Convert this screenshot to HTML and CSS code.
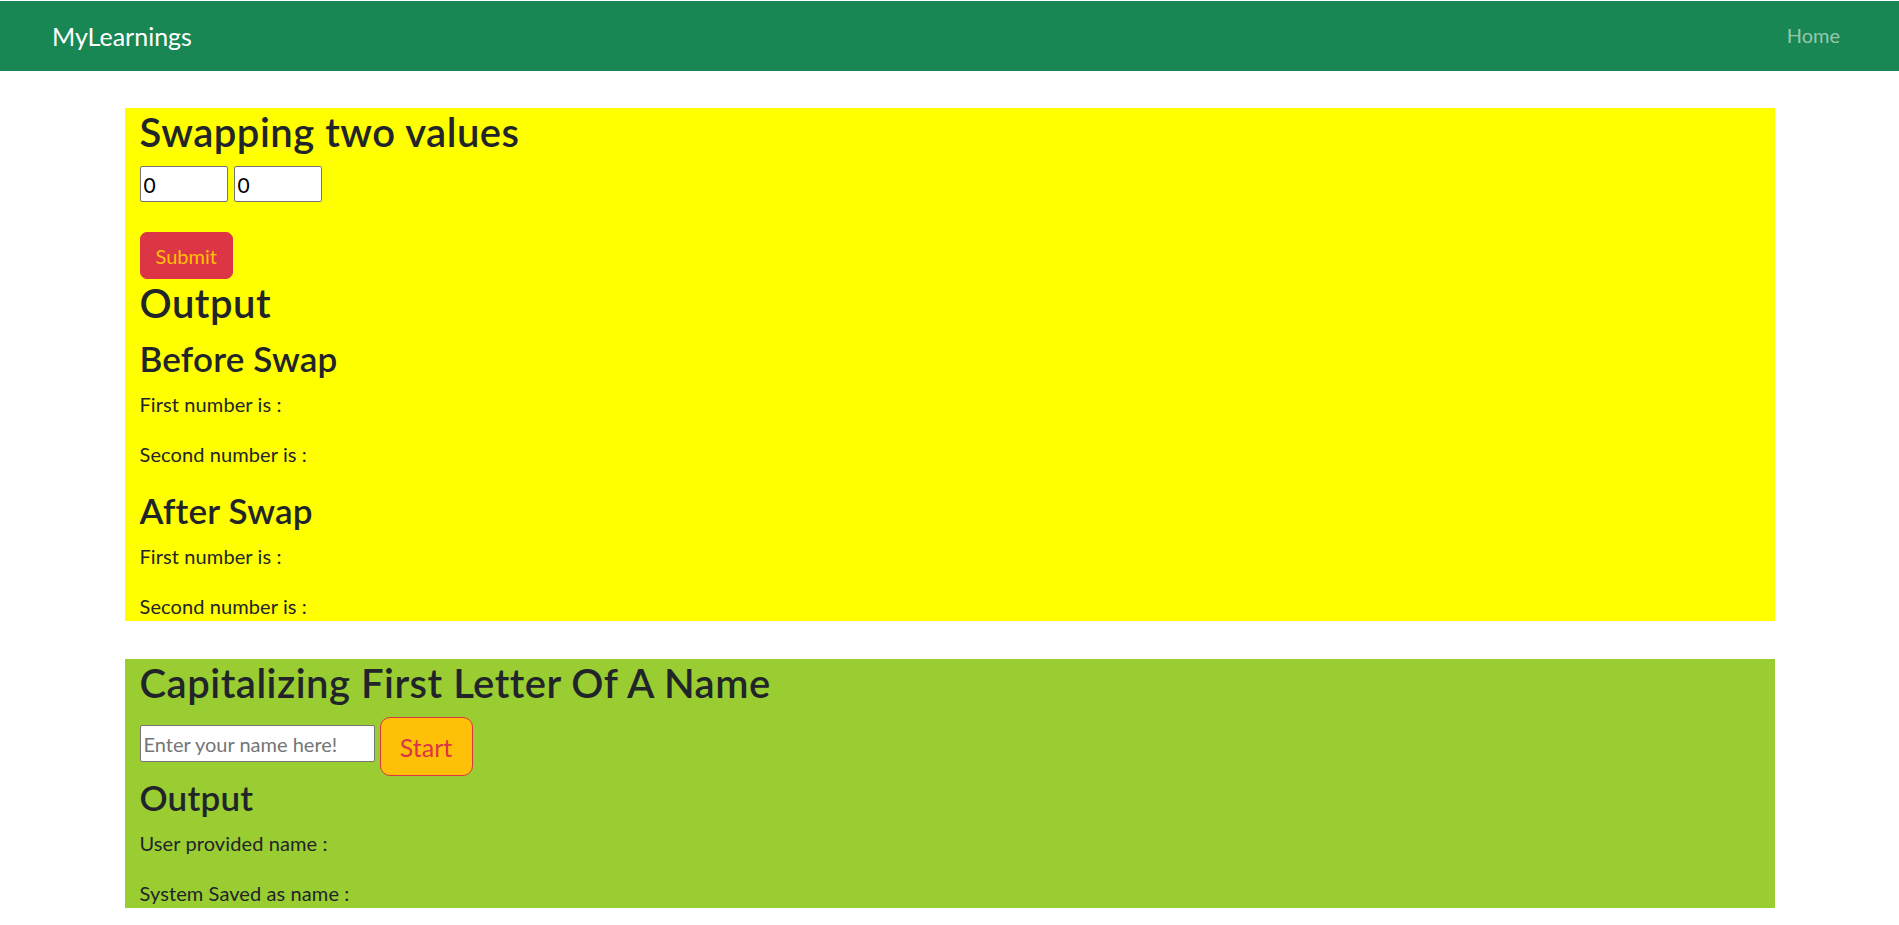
FILE: index.html
```html
<!DOCTYPE html>
<html lang="en">
<head>
<meta charset="utf-8">
<title>MyLearnings</title>
<link rel="stylesheet" href="styles.css">
</head>
<body>
<nav class="navbar">
  <a class="brand" href="#">MyLearnings</a>
  <a class="nav-link" href="#">Home</a>
</nav>
<main class="page">
  <section class="panel panel-swap">
    <h2 class="title">Swapping two values</h2>
    <div class="num-row">
      <input class="num" type="text" value="0">
      <input class="num" type="text" value="0">
    </div>
    <button class="btn-submit" type="button">Submit</button>
    <h2 class="title">Output</h2>
    <h3 class="sub">Before Swap</h3>
    <p class="line">First number is :</p>
    <p class="line">Second number is :</p>
    <h3 class="sub">After Swap</h3>
    <p class="line">First number is :</p>
    <p class="line">Second number is :</p>
  </section>
  <section class="panel panel-cap">
    <h2 class="title">Capitalizing First Letter Of A Name</h2>
    <div class="name-row">
      <input class="name" type="text" placeholder="Enter your name here!">
      <button class="btn-start" type="button">Start</button>
    </div>
    <h3 class="sub">Output</h3>
    <p class="line">User provided name :</p>
    <p class="line">System Saved as name :</p>
  </section>
</main>
</body>
</html>
```
FILE: styles.css
```css
html, body {
  margin: 0;
  padding: 0;
  background: #ffffff;
}
body {
  font-family: Lato, "Open Sans", sans-serif;
  font-size: 20px;
  line-height: 1.5;
  color: #212529;
}
.navbar {
  margin-top: 1px;
  height: 70px;
  background: #198754;
  display: flex;
  align-items: center;
  justify-content: space-between;
  padding: 0 59px 0 52px;
  box-sizing: border-box;
}
.brand {
  font-size: 25px;
  line-height: 30px;
  color: #ffffff;
  text-decoration: none;
}
.nav-link {
  font-size: 20px;
  line-height: 30px;
  color: rgba(255, 255, 255, 0.55);
  text-decoration: none;
  margin-top: -2px;
}
.page {
  width: 1650px;
  margin: 0 auto;
}
.panel {
  padding: 0 15px;
}
.panel-swap {
  margin-top: 37px;
  background: #ffff00;
}
.panel-cap {
  margin-top: 38px;
  background: #9acd32;
}
.title {
  margin: 0 0 10px;
  font-size: 40px;
  line-height: 48px;
  font-weight: 600;
  letter-spacing: 0.5px;
}
.sub {
  margin: 0 0 10px;
  font-size: 35px;
  line-height: 42px;
  font-weight: 600;
  letter-spacing: 0.2px;
}
.line {
  margin: 0 0 20px;
  letter-spacing: 0.1px;
}
.line:last-child {
  margin-bottom: 0;
}
.num-row {
  display: flex;
  gap: 6px;
}
.num {
  box-sizing: border-box;
  width: 88px;
  height: 36px;
  margin: 0;
  padding: 0 3px;
  border: 1px solid #767676;
  border-radius: 2px;
  background: #ffffff;
  font-family: Lato, "Open Sans", sans-serif;
  font-size: 21px;
  color: #000000;
}
.btn-submit {
  display: block;
  margin-top: 30px;
  box-sizing: border-box;
  height: 47px;
  padding: 0 15px;
  border: 1px solid #dc3545;
  border-radius: 7px;
  background: #dc3545;
  color: #ffc107;
  font-family: Lato, "Open Sans", sans-serif;
  font-size: 20px;
  line-height: 30px;
}
.name-row {
  display: flex;
  align-items: flex-start;
  gap: 5px;
}
.name {
  box-sizing: border-box;
  width: 235px;
  height: 37px;
  margin: 8px 0 0;
  padding: 0 3px;
  border: 1px solid #767676;
  border-radius: 2px;
  background: #ffffff;
  font-family: Lato, "Open Sans", sans-serif;
  font-size: 20px;
  color: #000000;
}
.name::placeholder {
  color: #757575;
}
.btn-start {
  box-sizing: border-box;
  width: 93px;
  height: 59px;
  padding: 0 18px;
  border: 1px solid #dc3545;
  border-radius: 10px;
  background: #ffc107;
  color: #dc3545;
  font-family: Lato, "Open Sans", sans-serif;
  font-size: 25px;
  line-height: 36px;
}
```
